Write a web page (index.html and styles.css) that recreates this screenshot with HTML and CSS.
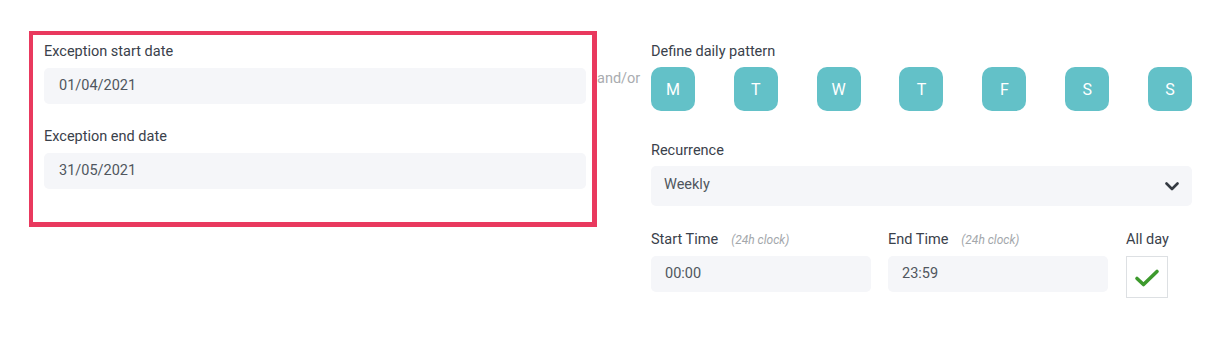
FILE: index.html
```html
<!DOCTYPE html>
<html>
<head>
<meta charset="utf-8">
<link rel="stylesheet" href="styles.css">
</head>
<body>
<div class="page">
  <div class="exception">
    <div class="label">Exception start date</div>
    <div class="input">01/04/2021</div>
    <div class="label label-gap">Exception end date</div>
    <div class="input">31/05/2021</div>
  </div>
  <div class="andor">and/or</div>
  <div class="pattern">
    <div class="label">Define daily pattern</div>
    <div class="days">
      <div class="day">M</div>
      <div class="day">T</div>
      <div class="day">W</div>
      <div class="day">T</div>
      <div class="day">F</div>
      <div class="day">S</div>
      <div class="day">S</div>
    </div>
    <div class="label rec-label">Recurrence</div>
    <div class="select">
      <span class="sel-text">Weekly</span>
      <svg class="chev" width="14" height="9" viewBox="0 0 14 9"><polyline points="1.5,1.5 7,7 12.5,1.5" fill="none" stroke="#343a42" stroke-width="2.6" stroke-linecap="round" stroke-linejoin="round"/></svg>
    </div>
    <div class="times">
      <div class="tcol">
        <div class="label">Start Time<span class="hint">(24h clock)</span></div>
        <div class="input tinput">00:00</div>
      </div>
      <div class="tcol">
        <div class="label">End Time<span class="hint">(24h clock)</span></div>
        <div class="input tinput">23:59</div>
      </div>
      <div class="acol">
        <div class="label">All day</div>
        <div class="check">
          <svg width="26" height="20" viewBox="0 0 26 20"><polyline points="3,10.5 9.5,16.5 23,3.5" fill="none" stroke="#3d9a2d" stroke-width="3.6" stroke-linecap="round" stroke-linejoin="round"/></svg>
        </div>
      </div>
    </div>
  </div>
</div>
</body>
</html>
```

FILE: styles.css
```css
html, body {
  margin: 0;
  padding: 0;
  background: #ffffff;
}
body {
  font-family: Roboto, "Liberation Sans", Arial, sans-serif;
  font-size: 14.5px;
  color: #3a414b;
}
.page {
  display: flex;
  align-items: flex-start;
  padding: 31px 0 0 29px;
}
.exception {
  width: 568px;
  height: 196px;
  box-sizing: border-box;
  border: 4px solid #e9395e;
  border-right-width: 5px;
  border-bottom-width: 5px;
  padding: 6px 6px 0 11px;
}
.label {
  height: 22px;
  line-height: 22px;
  font-size: 14.5px;
  color: #3a414b;
  white-space: nowrap;
}
.label-gap {
  margin-top: 22px;
}
.input {
  margin-top: 5px;
  height: 36px;
  line-height: 36px;
  background: #f5f6f9;
  border-radius: 5px;
  padding-left: 15px;
  color: #50565e;
  font-size: 14.5px;
}
.andor {
  width: 54px;
  margin-top: 38px;
  line-height: 20px;
  font-size: 14.5px;
  color: #a9acb0;
}
.pattern {
  width: 541px;
  padding-top: 10px;
}
.days {
  display: flex;
  justify-content: space-between;
  margin-top: 4px;
}
.day {
  width: 44px;
  height: 44px;
  border-radius: 10px;
  background: #63c1c8;
  color: #ffffff;
  font-size: 16px;
  display: flex;
  align-items: center;
  justify-content: center;
}
.rec-label {
  margin-top: 29px;
}
.select {
  margin-top: 4px;
  height: 40px;
  background: #f5f6f9;
  border-radius: 5px;
  display: flex;
  align-items: center;
  justify-content: space-between;
  padding: 0 13px 0 13px;
  color: #50565e;
}
.sel-text {
  margin-bottom: 3px;
}
.chev {
  display: block;
  margin-top: 1px;
}
.times {
  display: flex;
  margin-top: 23px;
  gap: 17px;
}
.tcol {
  width: 220px;
}
.tinput {
  margin-top: 5px;
  padding-left: 14px;
}
.hint {
  font-style: italic;
  font-size: 12px;
  color: #a3a7ab;
  margin-left: 13px;
}
.acol {
  width: 44px;
  padding-left: 1px;
}
.check {
  margin-top: 5px;
  width: 42px;
  height: 42px;
  box-sizing: border-box;
  border: 1px solid #dde0e3;
  background: #ffffff;
  display: flex;
  align-items: center;
  justify-content: center;
}
.check svg {
  display: block;
  margin-top: 1px;
}
```
